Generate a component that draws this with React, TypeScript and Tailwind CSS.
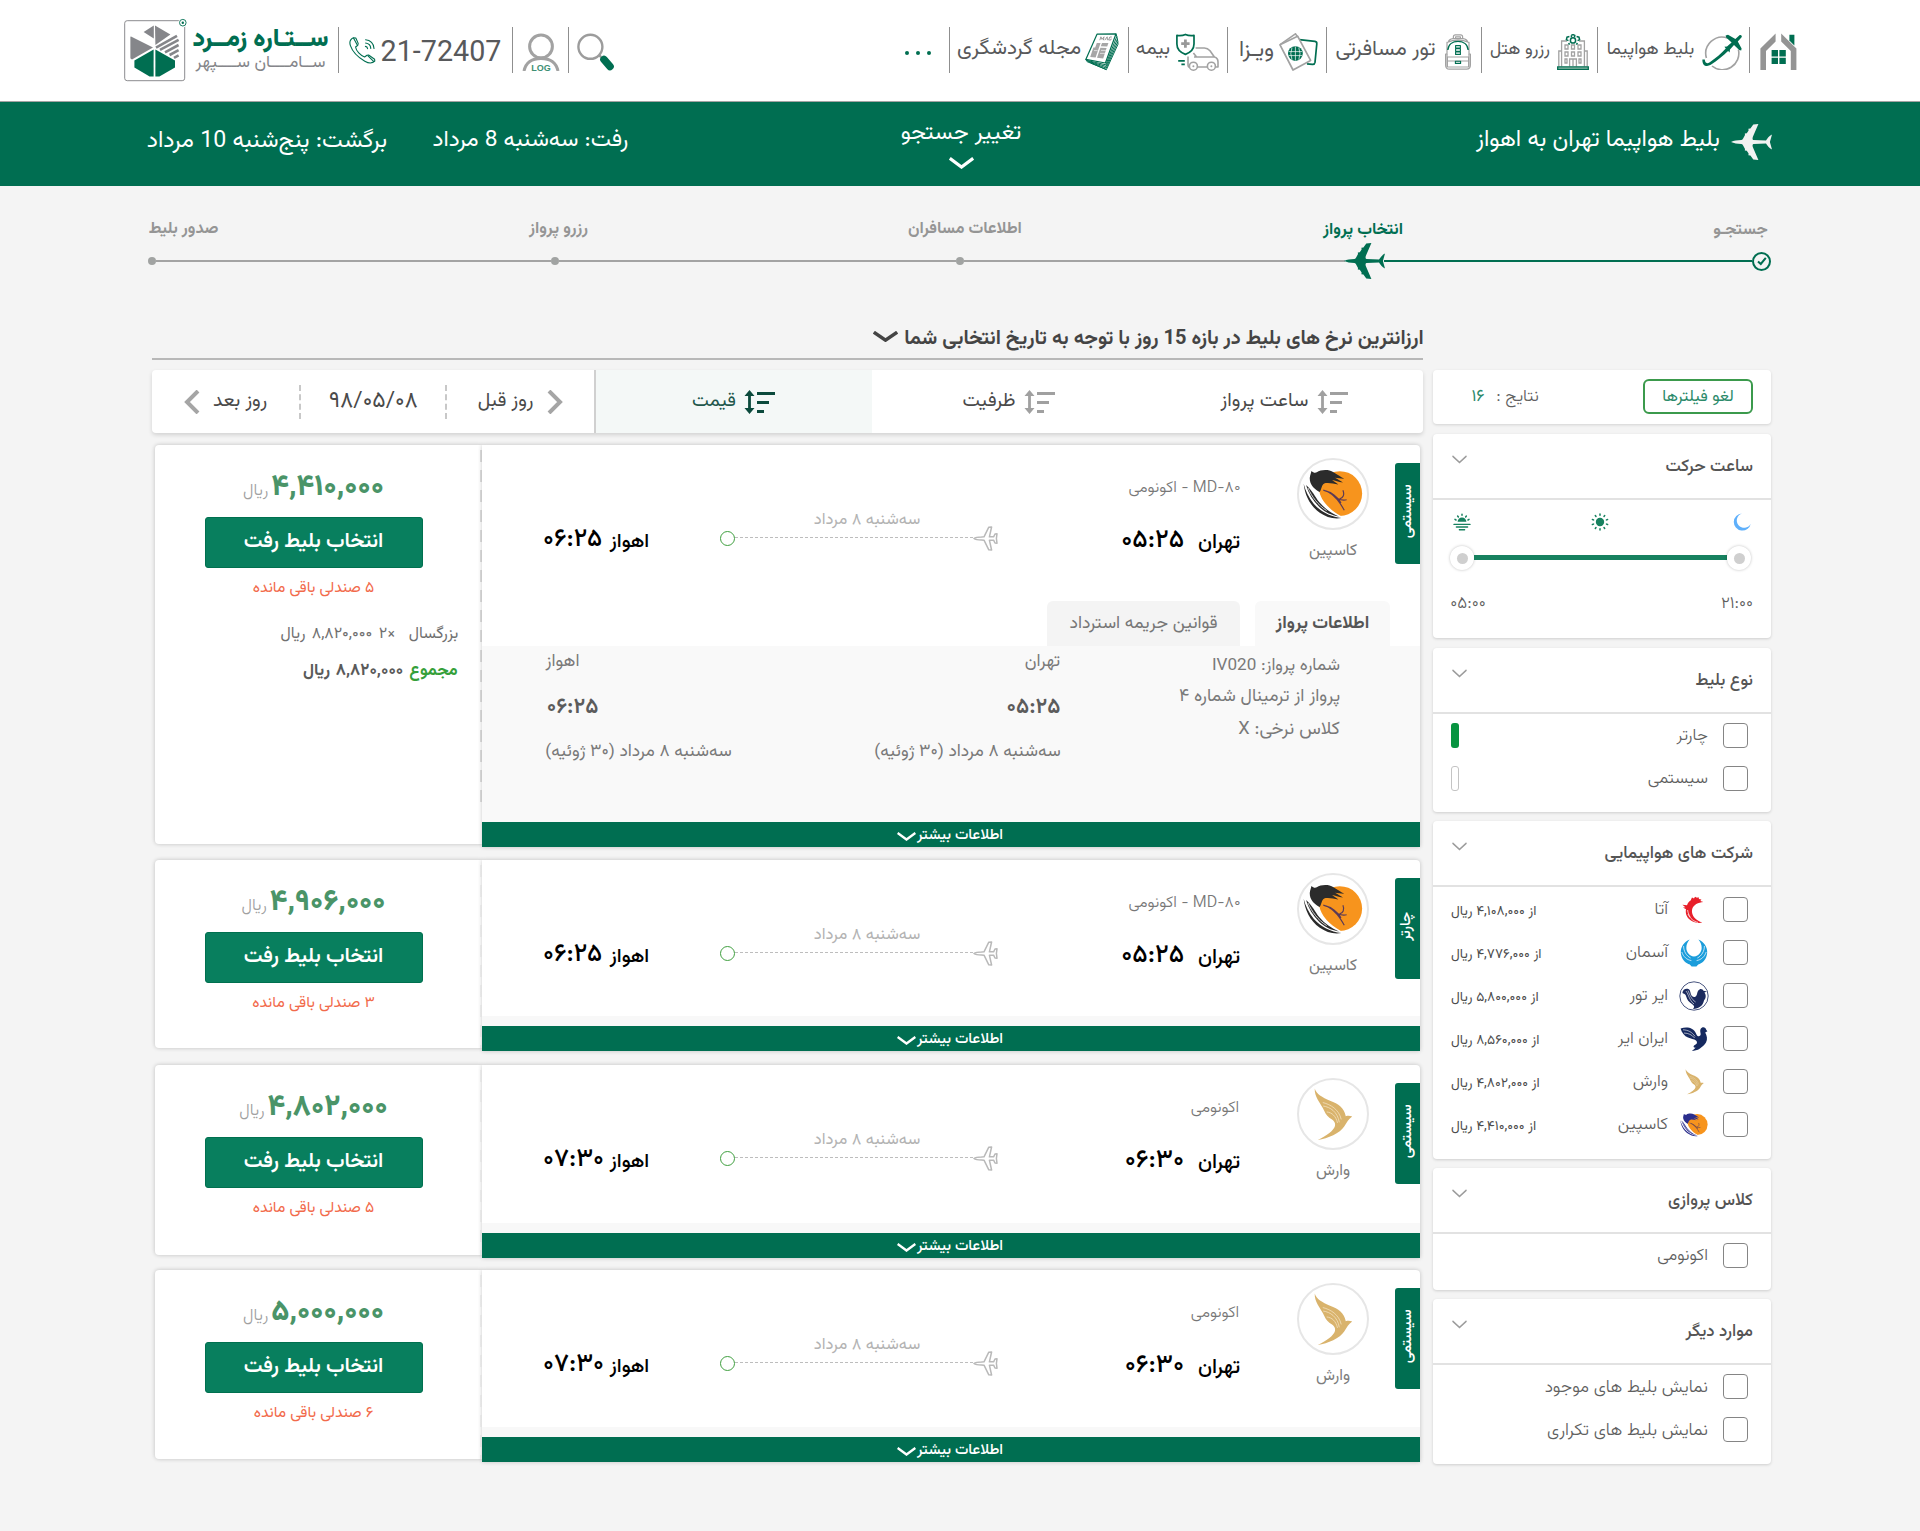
import React from "react";

type TextProps = { className?: string; children: React.ReactNode };

function T({ className = "", children }: TextProps) {
  return (
    <div dir="rtl" className={`flex shrink-0 items-center justify-center whitespace-nowrap ${className}`}>
      <span>{children}</span>
    </div>
  );
}

const GREEN = "#006e51";
const GRAY = "#999999";

function Chevron({ className = "", width = 2 }: { className?: string; width?: number }) {
  return (
    <svg viewBox="0 0 24 11" preserveAspectRatio="none" className={`shrink-0 ${className}`} fill="none" stroke="currentColor" strokeWidth={width}>
      <path d="M0.8 1.2 L12 9.2 L23.2 1.2" />
    </svg>
  );
}

function Airliner({ className = "" }: { className?: string }) {
  return (
    <svg viewBox="0 0 41 36" className={`shrink-0 ${className}`} fill="currentColor">
      <path d="M0 18 C3 16.6 6 16.2 10.5 16 C12 15.6 12.6 13.6 14 11 L13.8 9.4 L15.8 9.2 L17.6 6.4 L17.4 4.8 L19.4 4.6 L22.3 0.6 L27.4 0 L22 12.5 C21.3 14.3 21.4 15.8 22.4 16.1 L35 16.6 C36.3 14.6 38 12 41 10.6 L38.9 18 L41 25.4 C38 24 36.3 21.4 35 19.4 L22.4 19.9 C21.4 20.2 21.3 21.7 22 23.5 L27.4 36 L22.3 35.4 L19.4 31.4 L17.4 31.2 L17.6 29.6 L15.8 26.8 L13.8 26.6 L14 25 C12.6 22.4 12 20.4 10.5 20 C6 19.8 3 19.4 0 18 Z" />
    </svg>
  );
}

function OutlinePlane({ className = "" }: { className?: string }) {
  return (
    <svg viewBox="0 0 25 25" className={`shrink-0 ${className}`} fill="none" stroke="#b9b9b9" strokeWidth="1.5" strokeLinejoin="round">
      <path d="M1 12.5 C2.5 11.3 5 11 8.5 11 L11 10.8 L15.8 1.2 L18.6 1 L16.4 10.8 L20.6 10.8 L22 8 L24 7.8 L23.4 12.5 L24 17.2 L22 17 L20.6 14.2 L16.4 14.2 L18.6 24 L15.8 23.8 L11 14.2 L8.5 14 C5 14 2.5 13.7 1 12.5 Z" />
    </svg>
  );
}

function SortIcon({ className = "" }: { className?: string }) {
  return (
    <svg viewBox="0 0 31 24" className={`h-6 w-[31px] shrink-0 ${className}`} fill="currentColor">
      <path d="M5.5 0 L10.5 6 H6.9 V18 H10.5 L5.5 24 L0.5 18 H4.1 V6 H0.5 Z" />
      <rect x="13" y="2" width="18" height="3" />
      <rect x="13" y="11" width="12" height="3" />
      <rect x="13" y="20" width="7" height="3" />
    </svg>
  );
}

function CaspianLogo({ className = "", dark = "#2b2b2b" }: { className?: string; dark?: string }) {
  return (
    <svg viewBox="0 0 61 52" className={`shrink-0 ${className}`}>
      <circle cx="37.4" cy="25" r="22.8" fill="#f7941d" />
      <path d="M6 12 C9 18 12 21.4 16.6 23 C18.4 32 26 41 38.6 48 L34 50.6 L18 46 L6 30 Z" fill="#fff" />
      <path d="M8.5 2 C10.4 3.6 12 4.4 14 3.4 C18 0.6 26 0.2 31 3.2 C35 5.4 38 7.8 42 10 C38 9.6 35 9 32.6 8.8 C36 10.6 38 11.8 40.6 13.8 C36 13.2 32.6 11.8 29.6 11.2 C32 13 33.6 14 36 15.8 C31 15 27 13.8 23 14.4 C18.6 15.6 19.4 19.6 17 23.4 C13 21.6 8 17.6 7 12 C6.2 8 7.8 5.4 8.5 2 Z" fill={dark} />
      <g fill={dark}>
        <path d="M0.6 15 C1.6 26 7 37.6 17 44.6 C23.4 49 31 51.4 39 50 C28 48.6 18 43.6 11 35.6 C5.6 29 2.4 22 0.6 15 Z" />
        <path d="M3 16.4 C5.4 24.6 10 32.4 16.6 38.8 C22 43.8 28 47 36.6 48.4 C29 45.4 22 40.4 16.6 34 C12 28.4 10 22.6 3 16.4 Z" />
      </g>
      <path d="M5 19.4 C9 28.4 15 36.6 24 42.4" fill="none" stroke="#fff" strokeWidth="0.8" />
      <path d="M20.6 21.6 C29 23.6 36 29 38.6 34.6 M24 22.4 C33 27 37.4 34 42 42 M29 25.6 C33.4 30 39 32.4 44.4 31.4 M40.6 21.6 C42.6 26.4 40.6 29.6 37.4 30.4" fill="none" stroke="#5b3a56" strokeWidth="1.2" />
    </svg>
  );
}

function VareshLogo({ className = "" }: { className?: string }) {
  return (
    <svg viewBox="0 0 40 54" className={`shrink-0 ${className}`}>
      <path d="M1.4 0.4 C3 6 9 9.4 17 13 C25.6 16.4 31.4 20 33 28.8 C35 28.2 37 28.2 39.6 29 C36 31.2 34 35 31.6 39 C27 46.4 15 51.4 4.4 53 C13 48.6 20.8 43.4 22 38.6 C22.8 34.6 20 32.6 16.6 30.6 C12.8 28 11.6 24 9.6 20.4 C6.6 14.4 1 9 1.4 0.4 Z" fill="#d9b36c" />
      <path d="M10 18.4 C17 19.4 24.6 24 26.4 35 M13.6 24.4 C19 25 23 28.6 24.6 35.6 M9.6 14.8 C18 17 26 22 28.4 32" fill="none" stroke="#f3e2c1" strokeWidth="0.8" />
    </svg>
  );
}

function AtaLogo() {
  return (
    <svg viewBox="0 0 28 28" className="size-7">
      <path d="M12 1.6 L14 2.4 L15 0.8 L17 1.8 L18.6 1.2 L19 3 L21.4 3.4 L20.4 5 L23.4 6 C18.6 6.4 13 8.6 12 14 C11.2 19.6 16 24.6 22.4 26.6 C15 28 8 24.4 6.2 18.6 C5.6 16.2 5.8 14.4 6 13.2 L3 11.4 L5.4 11.2 L2.4 8.8 L7 9.2 C8 7 9 5.6 10.6 4.6 Z" fill="#e8202a" />
      <path d="M8 18 C10 22.6 14 25.6 18 26.4 M7.6 14 C8 17 9 19.4 10.4 21.4" fill="none" stroke="#fff" strokeWidth="0.7" />
    </svg>
  );
}

function AsemanLogo() {
  return (
    <svg viewBox="0 0 28 28" className="size-7">
      <path d="M9.6 0.6 C2.4 3.6 -0.6 10.6 1.4 17 C2.6 21.4 6 24.4 9.8 25.4 L11.6 27.4 H16.4 L18.2 25.4 C22 24.4 25.4 21.4 26.6 17 C28.6 10.6 25.6 3.6 18.4 0.6 C22.2 5 22.6 10.4 20 14 C18.4 16.2 16.4 17.4 14 17.4 C11.6 17.4 9.6 16.2 8 14 C5.4 10.4 5.8 5 9.6 0.6 Z" fill="#1b9ddb" />
      <path d="M1.8 13 C3.4 18 7 20.8 11.4 21.6 M3.6 7 C3.6 12.4 6.4 16.8 10.6 19 M26.2 13 C24.6 18 21 20.8 16.6 21.6 M24.4 7 C24.4 12.4 21.6 16.8 17.4 19" fill="none" stroke="#fff" strokeWidth="0.7" />
    </svg>
  );
}

function AirTourLogo() {
  return (
    <svg viewBox="0 0 30 30" className="size-[30px]">
      <circle cx="15" cy="15" r="14.2" fill="#fff" stroke="#1b2a5e" strokeWidth="0.8" />
      <path d="M3.4 12 C3.6 9 6 7.4 8.6 7.8 C11.2 8.2 11.2 11 12 13.6 C13 16.4 16 17 17.4 14.6 C18.6 12.6 18 9.6 20.6 8.4 C22.4 7.6 24 8.6 24.4 9.8 L28 10.4 L25.4 11.6 C27.4 14 27 17.6 25 19.4 C24 24.6 20 27.6 14 28 C17 25 13.6 24 11 21.6 C8 19 7.6 16.4 6.6 14 C5.6 13 4.6 12.6 3.4 12 Z" fill="#1b2a5e" />
      <path d="M7 10 C10 14 10 19 15 23 M9 9.6 C11 14 12 18 16.6 21" fill="none" stroke="#fff" strokeWidth="0.6" />
    </svg>
  );
}

function IranAirLogo() {
  return (
    <svg viewBox="0 0 28 28" className="size-7">
      <path d="M0.6 3.4 C7 1.4 13.6 2.6 16 8.4 C17 11 18.8 12.2 20.2 10.6 C21.6 9 19.4 6.6 20.6 4 C22 1.4 25.8 1.8 26.2 4.8 L27.4 6.2 L25.2 7.4 C27 10.6 27.8 14.4 26 17.4 C24.4 20.2 22.6 21.2 20 23.4 C17.4 25.6 14.6 25.2 11.6 26 C13.4 25 14.6 24 15.6 22.6 C13 23 12.8 20.8 15.6 19.6 C17.4 18.6 17.4 17 16 15.6 C14 14 11 14 8 12.6 C4.6 11 1.6 7.6 0.6 3.4 Z" fill="#15295f" />
      <path d="M3 4.8 C8 5 12 7 15 11.4 M4 8 C8.6 8.2 12 9.8 14.6 13" fill="none" stroke="#fff" strokeWidth="0.6" />
    </svg>
  );
}

/* ---------- header ---------- */

function Sep({ className = "" }: { className?: string }) {
  return <div className={`mt-[27px] h-[46px] w-px shrink-0 bg-[#8f8f8f] ${className}`} />;
}

function BrandMark() {
  return (
    <svg viewBox="0 0 64 64" className="mt-[18px] h-16 w-16 shrink-0">
      <rect x="0.7" y="2.7" width="60" height="60" rx="2.5" fill="#fff" stroke="#8c8c8f" strokeWidth="1" />
      <g fill="#85868a">
        <path d="M31 7.6 L46.4 16.4 L31.4 27 Z" />
        <path d="M29.8 7.6 V20.6 L19.6 14 Z" />
        <path d="M7 18.4 L29 29.6 L8 41.4 C6.8 40.8 6.4 40.4 6.4 39.4 V18.8 Z" />
      </g>
      <g stroke="#85868a" strokeWidth="2.6" fill="none">
        <path d="M32 29.6 L53 17.8" />
        <path d="M36 31.8 L54.6 21.8" />
        <path d="M41 34.4 L54.6 27" />
        <path d="M45.6 37 L54.6 32.2" />
        <path d="M50 39.8 L54.6 37.4" />
      </g>
      <path d="M29.6 31.6 V58.6 L25.6 58.6 L10.4 49.6 V42.4 Z" fill={GREEN} />
      <path d="M31.4 31.6 V58.6 L35.4 58.6 L51 49.6 V42.4 Z" fill={GREEN} />
      <circle cx="58.8" cy="4.7" r="4.6" fill="#fff" />
      <circle cx="58.8" cy="4.7" r="3.3" fill="none" stroke={GREEN} strokeWidth="0.9" />
      <circle cx="58.8" cy="4.7" r="1.2" fill={GREEN} />
    </svg>
  );
}

function PhoneIcon() {
  return (
    <svg viewBox="0 0 27 27" className="ml-2.5 mt-[37px] h-[27px] w-[27px] shrink-0" fill="none" stroke={GREEN} strokeWidth="1.1" strokeLinejoin="round" strokeLinecap="round">
      <path d="M4.4 0.8 L6.8 1 L9.2 6.4 L8.8 8.2 L6.6 10 C7 13.8 11.6 18.6 15.6 20 L18 18.2 L19.6 18 L25.6 22.2 L25.8 24 C23 27 20 26.6 15.8 24.2 C9.6 20.6 3.4 14.4 1.4 8.6 C0.2 5 1.4 2.2 4.4 0.8 Z" />
      <path d="M4.6 1.2 L8 7.4 M19 18.8 L24.6 24.4" />
      <path d="M16.4 9.4 C17.6 9.6 18.4 10.4 18.6 11.6 M16.6 6 C19.6 6.4 21.6 8.4 21.8 11.4 M16.6 2.8 C21.4 3 24.8 6.6 25 11.4" />
    </svg>
  );
}

function UserIcon() {
  return (
    <div className="ml-[9px] mt-[33px] flex h-[44px] w-[38px] shrink-0 flex-col items-center">
      <svg viewBox="0 0 38 38" className="h-[38px] w-[38px] shrink-0">
        <circle cx="19" cy="13.4" r="11.4" fill="none" stroke="#a2a2a2" strokeWidth="3" />
        <path d="M2 38 C3.6 30 9 25.4 19 25.4 C29 25.4 34.4 30 36 38" fill="none" stroke="#a2a2a2" strokeWidth="3" />
      </svg>
      <span className="-mt-[9px] shrink-0 font-['Liberation_Sans'] text-[9px] leading-[12px] font-bold text-[#3d8f74]">LOG</span>
    </div>
  );
}

function SearchIcon() {
  return (
    <svg viewBox="0 0 38 38" className="ml-2 mt-[33px] h-[38px] w-[38px] shrink-0">
      <circle cx="13.4" cy="13.8" r="12" fill="none" stroke="#9c9c9c" strokeWidth="2.4" />
      <path d="M22.4 22.4 L25 25" stroke="#9c9c9c" strokeWidth="2.4" />
      <path d="M27 26.6 L33 33.4" stroke={GREEN} strokeWidth="7.6" strokeLinecap="round" />
    </svg>
  );
}

function MagazineIcon() {
  return (
    <svg viewBox="0 0 34 38" className="mt-[33px] h-[38px] w-[34px] shrink-0" fill="none" strokeLinejoin="round">
      <path d="M12 1.2 L31 0.8 L20.4 30 L0.8 26.4 Z" fill="#fff" stroke={GREEN} strokeWidth="1.2" />
      <path d="M31 0.8 L31.8 3.4 L20.8 31.8 L1.8 27.4 M31.8 3.4 L32.4 6 L21 33.4 L3 28.2 M32.4 6 L32.8 8.6 L21.2 35 L4.4 29 M32.8 8.6 L33 11.2 L21.4 36.6 L6 30 M0.8 26.4 L2 28.6 L21.4 36.6" stroke={GREEN} strokeWidth="1" />
      <path d="M14.8 7.2 L15.9 3.8 L17 6.4 L19 3.8 L18.4 7.2 M19.8 7.2 L22.2 3.8 L22.4 7.2 M26.8 4 H24.8 L23.6 7 H25.8 L26.2 5.6" stroke={GRAY} strokeWidth="1" />
      <path d="M11.8 10 L15.6 10 L10.6 24.6 L5.2 24 L8.4 14.6 L10.2 14.4 Z M17 10 L23.4 10 L22.2 13.4 L15.8 13.2 Z M15.4 14.8 L21.6 15 L18.2 25.6 L12 24.8 Z" fill="#a6a6a6" />
      <path d="M16 17.4 H21 M15 20.4 H20 M9 17.6 H12.6" stroke="#fff" strokeWidth="0.6" />
    </svg>
  );
}

function InsuranceIcon() {
  return (
    <svg viewBox="0 0 43 38" className="mt-[33px] h-[38px] w-[43px] shrink-0" fill="none" strokeLinejoin="round">
      <path d="M19.6 15 H28.4 C31 15 32.6 16.2 34 17.8 L38.4 24 C41 24.6 42 26.4 42 29 V34 H39.6 M31.4 34 H21.4 M13.4 34 C12.2 34 12 33 12 31.4 V23.4 M18 24 H38 M20.6 24 L17.4 20" stroke="#a2a2a2" strokeWidth="1.6" />
      <circle cx="17.4" cy="33.2" r="4" stroke="#a2a2a2" strokeWidth="1.6" />
      <circle cx="17.4" cy="33.2" r="1" fill="#a2a2a2" />
      <circle cx="35.4" cy="33.2" r="4" stroke="#a2a2a2" strokeWidth="1.6" />
      <circle cx="35.4" cy="33.2" r="1" fill="#a2a2a2" />
      <path d="M9.4 1.4 C12 2.6 15 2.8 18 2.4 V11 C18 16 14.6 19.4 9.4 21.4 C4.2 19.4 0.9 16 0.9 11 V2.4 C4 2.8 7 2.6 9.4 1.4 Z" fill="#fff" stroke={GREEN} strokeWidth="1.7" />
      <path d="M9.4 6.4 V14.8 M5.2 10.6 H13.6" stroke={GRAY} strokeWidth="2.8" />
      <path d="M2.2 27.8 H8.8 M5.4 31.4 H8.8" stroke={GREEN} strokeWidth="1.7" />
    </svg>
  );
}

function VisaIcon() {
  return (
    <svg viewBox="0 0 39 38" className="mt-[33px] h-[38px] w-[39px] shrink-0" fill="none" strokeLinejoin="round">
      <path d="M18 6.4 L36 8.4 Q38 8.8 37.8 10.8 L36 29.4 Q35.6 31.6 33.4 31.4 L28 30.8" stroke={GREEN} strokeWidth="1.7" />
      <path d="M1.4 11.4 L16.4 0.8 L19 4.4" stroke="#a2a2a2" strokeWidth="1.6" />
      <path d="M1 11.8 L18.6 3.2 L31.6 27.4 L14 37 Z" fill="#fff" stroke="#a2a2a2" strokeWidth="1.7" />
      <circle cx="16.4" cy="20.6" r="7.4" fill={GREEN} />
      <path d="M9.6 18.6 H23.2 M9.6 22.6 H23.2 M16.4 13.6 V27.6 M13 14.6 Q10.6 20.6 13 26.6 M19.8 14.6 Q22.2 20.6 19.8 26.6" stroke="#fff" strokeWidth="0.7" />
    </svg>
  );
}

function BackpackIcon() {
  return (
    <svg viewBox="0 0 26 36" className="mt-[34px] h-9 w-[26px] shrink-0" fill="none" stroke="#a2a2a2" strokeWidth="1.2" strokeLinejoin="round">
      <path d="M8.4 4.4 V2.8 Q8.4 0.8 10.4 0.8 H15.6 Q17.6 0.8 17.6 2.8 V4.4 M10.6 4.4 V2.8 H15.4 V4.4" />
      <path d="M3.4 8 Q4 5 8 4.6 H18 Q22 5 22.6 8 M2 8.4 Q13 4 24 8.4 V20 H25.4 V31 Q25.4 35.2 21.6 35.2 H4.4 Q0.6 35.2 0.6 31 V20 H2 Z" />
      <path d="M2.4 23 H23.6 V33 H2.4 Z M2.4 27 H23.6 M2 20 V33 M24 20 V33" />
      <path d="M2.8 16 C3.4 10 8 7.4 13 7.4 C18 7.4 22.6 10 23.2 16" stroke={GREEN} strokeWidth="1.4" />
      <path d="M10.6 11.6 H15.4 V14 H10.6 Z M10.6 14.8 H15.4 V17.2 H10.6 Z M10.6 18 H15.4 V20.4 H10.6 Z M10.4 27.2 H15.6 V29.4 H10.4 Z" stroke={GREEN} strokeWidth="1.1" />
    </svg>
  );
}

function HotelIcon() {
  return (
    <svg viewBox="0 0 32 36" className="mt-[34px] h-9 w-8 shrink-0" fill="none" stroke="#a2a2a2" strokeWidth="1.3">
      <path d="M4.6 32.4 V7 H10 M22 7 H27.4 V32.4 M1.8 32.4 V17 H4.6 M30.2 32.4 V17 H27.4" />
      <path d="M8 11 H11 V15 H8 Z M14.5 11 H17.5 V15 H14.5 Z M21 11 H24 V15 H21 Z M8 18 H11 V22 H8 Z M14.5 18 H17.5 V22 H14.5 Z M21 18 H24 V22 H21 Z M8 25 H10 V29 H8 Z M22 25 H24 V29 H22 Z M12.6 32.4 V25 H19.4 V32.4 M16 25 V32" />
      <path d="M0.7 32.9 H31.3 V35.3 H0.7 Z" fill="#8fb8a8" stroke={GREEN} />
      <g stroke={GREEN} strokeWidth="1.5">
        <circle cx="16" cy="6.4" r="2.6" />
        <path d="M14.2 1.4 L16 0.6 L17.8 1.4 L17.4 3.4 M19.6 2.6 L22 3.2 L22.6 5.6 L20.6 6.6 M20.4 9 L19.4 10.6 M11.6 9 L12.6 10.6 M11.4 6.6 L9.4 5.6 L10 3.2 L12.4 2.6 M14.6 3.4 L14.2 1.4" />
      </g>
    </svg>
  );
}

function FlightIcon() {
  return (
    <svg viewBox="0 0 41 36" className="mt-[34px] h-9 w-[41px] shrink-0" fill="none">
      <path d="M26 4.2 A16.4 16.4 0 0 0 4.4 24 M10 32 A16.4 16.4 0 0 0 36.4 15.6" stroke="#a2a2a2" strokeWidth="1.6" />
      <path d="M0.4 25.4 C0 31.6 4.4 33.4 8.8 30.8 C15.6 26.6 20.8 22 26.6 16.6 L24 14.2 C19.4 19.2 13.6 24.2 7.8 28.2 C4.8 30.2 3 29 2.8 25.6 Z" fill={GREEN} />
      <path d="M25 12.6 L29.6 8.6 L24.2 3.6 L23.6 1.4 L26 0.8 L33.4 5 L37.2 1.4 C38.8 0 40.8 2 39.4 3.6 L35.8 7.4 L39.6 14.4 L39.2 16.4 L37.2 16 L32 11 L28 15.6 L27.6 18.4 L24.6 15.6 L22.4 12.8 Z" fill={GREEN} />
    </svg>
  );
}

function HomeIcon() {
  return (
    <svg viewBox="0 0 37 38" className="ml-[10px] mt-[33px] h-[38px] w-[37px] shrink-0">
      <path d="M0.4 37 V15.4 L15.6 0.6 V8.6 L6 18 V37 Z" fill="#949494" />
      <path d="M36.4 37 V15.4 L21.2 0.6 V8.6 L30.8 18 V37 Z" fill="#949494" />
      <path d="M29.4 1.8 H34.4 V12.4 L29.4 7.4 Z" fill={GREEN} />
      <path d="M11.6 17 H18 V23.4 H11.6 Z M19.4 17 H25.8 V23.4 H19.4 Z M11.6 24.8 H18 V31 H11.6 Z M19.4 24.8 H25.8 V31 H19.4 Z" fill={GREEN} />
    </svg>
  );
}

const navText = "mt-[36px] h-7 text-[#58595b]";

function Header() {
  return (
    <header className="flex h-[102px] items-start border-b border-[#a3a3a3] bg-white pl-[124px]">
      <BrandMark />
      <div className="ml-[4px] mt-[27px] flex w-[137px] shrink-0 flex-col">
        <T className="h-[26px] w-[137px] text-[24.6px] leading-none font-black text-[#006e51]">ســتـاره زمــرد</T>
        <T className="mt-px h-[18px] w-[137px] text-[17px] leading-none text-[#85868a]">ســامــــان ســــپهر</T>
      </div>
      <Sep className="ml-[9px]" />
      <PhoneIcon />
      <T className="ml-[5px] mt-[36px] h-8 w-[120px] font-['Roboto'] text-[28.7px] text-[#58595b]">21-72407</T>
      <Sep className="ml-[11px]" />
      <UserIcon />
      <Sep className="ml-[8px]" />
      <SearchIcon />
      <div className="ml-[290px] mt-[51px] flex w-[26px] shrink-0 justify-between">
        <div className="size-1 rounded-full bg-[#006e51]" />
        <div className="size-1 rounded-full bg-[#006e51]" />
        <div className="size-1 rounded-full bg-[#006e51]" />
      </div>
      <Sep className="ml-[18px]" />
      <T className={`ml-[7px] w-[124px] text-[20.9px] ${navText}`}>مجله گردشگری</T>
      <div className="w-[4px] shrink-0" />
      <MagazineIcon />
      <Sep className="ml-[9px]" />
      <T className={`ml-[7px] w-[34px] text-[19.6px] ${navText}`}>بیمه</T>
      <div className="w-[6px] shrink-0" />
      <InsuranceIcon />
      <Sep className="ml-[8px]" />
      <T className={`ml-[10px] w-[37px] text-[22px] ${navText}`}>ویـزا</T>
      <div className="w-[4px] shrink-0" />
      <VisaIcon />
      <Sep className="ml-[8px]" />
      <T className={`ml-[8px] w-[101px] text-[21.1px] ${navText}`}>تور مسافرتی</T>
      <div className="w-[9px] shrink-0" />
      <BackpackIcon />
      <Sep className="ml-[10px]" />
      <T className={`ml-[8px] w-[60px] text-[17.4px] ${navText}`}>رزرو هتل</T>
      <div className="w-[7px] shrink-0" />
      <HotelIcon />
      <Sep className="ml-[8px]" />
      <T className={`ml-[9px] w-[87px] text-[17.8px] ${navText}`}>بلیط هواپیما</T>
      <div className="w-[8px] shrink-0" />
      <FlightIcon />
      <Sep className="ml-[6px]" />
      <HomeIcon />
    </header>
  );
}

function SearchBand() {
  return (
    <section className="flex h-[84px] items-start bg-[#006e51] pl-[147px] text-[23.2px] text-white">
      <T className="mt-[23px] h-8 w-[240px]">برگشت: پنج‌شنبه 10 مرداد</T>
      <T className="ml-[46px] mt-[23px] h-8 w-[195px] text-[22.7px]">رفت: سه‌شنبه 8 مرداد</T>
      <div className="ml-[272px] flex w-[122px] flex-col items-center">
        <T className="mt-[16px] h-8 w-[120px] text-[22.6px]">تغییر جستجو</T>
        <Chevron width={3} className="mt-[7px] h-3 w-[25px]" />
      </div>
      <T className="ml-[454px] mt-[22px] h-8 w-[244px] text-[23.2px]">بلیط هواپیما تهران به اهواز</T>
      <Airliner className="ml-[11px] mt-[22px] h-9 w-[41px] text-[#f2f2f2]" />
    </section>
  );
}

function Steps() {
  return (
    <section className="h-[134px] pl-[148px] pt-[29px]">
      <div className="flex h-7 text-[16.5px] font-bold text-[#959595]">
        <T className="h-7 w-[71px]">صدور بلیط</T>
        <T className="ml-[310px] h-7 w-[59px]">رزرو پرواز</T>
        <T className="ml-[321px] h-7 w-[112px]">اطلاعات مسافران</T>
        <T className="ml-[301px] mt-px h-7 w-[82px] text-[#006e51]">انتخاب پرواز</T>
        <T className="ml-[308px] mt-px h-7 w-[57px]">جستجـو</T>
      </div>
      <div className="flex h-9 items-center">
        <div className="size-2 rounded-full bg-[#a1a3a2]" />
        <div className="h-0.5 w-[395px] bg-[#a3a3a3]" />
        <div className="size-2 rounded-full bg-[#a1a3a2]" />
        <div className="h-0.5 w-[397px] bg-[#a3a3a3]" />
        <div className="size-2 rounded-full bg-[#a1a3a2]" />
        <div className="h-0.5 w-[381px] bg-[#a3a3a3]" />
        <Airliner className="-mx-px h-9 w-[41px] text-[#006e51]" />
        <div className="h-0.5 w-[368px] bg-[#006e51]" />
        <div className="flex size-[19px] items-center justify-center rounded-full border-2 border-[#006e51] text-[#006e51]">
          <svg viewBox="0 0 10 10" className="size-2.5" fill="none" stroke="currentColor" strokeWidth="2">
            <path d="M1 5.4 L3.8 8 L8.8 1.8" />
          </svg>
        </div>
      </div>
    </section>
  );
}

/* ---------- sidebar ---------- */

function FilterCard({ title, className, children }: { title: string; className: string; children: React.ReactNode }) {
  return (
    <div className={`overflow-hidden rounded-[4px] bg-white shadow-[0_1px_3px_rgba(0,0,0,0.16)] ${className}`}>
      <div className="flex h-[66px] items-start justify-between border-b-2 border-[#e2e2e2] pl-[19px] pr-[18px]">
        <Chevron width={2} className="mt-[21px] h-[9px] w-[15px] text-[#9c9c9c]" />
        <div dir="rtl" className="mt-[19px] h-7 text-[17px] leading-7 font-medium text-[#555]">
          {title}
        </div>
      </div>
      {children}
    </div>
  );
}

function FilterRow({ label, icon, price, mark, wide }: { label: string; icon?: React.ReactNode; price?: string; mark?: React.ReactNode; wide?: boolean }) {
  return (
    <div className="flex h-[43px] items-start pl-[18px] pr-[23px]">
      {mark}
      {price && (
        <div dir="rtl" className="mt-[2px] text-[13.8px] leading-[25px] whitespace-nowrap text-[#4c4c4c]">
          {price}
        </div>
      )}
      <div dir="rtl" className={`mt-px ml-auto leading-[25px] font-light whitespace-nowrap text-[#606060] ${wide ? "text-[17.4px]" : "text-[16.8px]"}`}>
        {label}
      </div>
      {icon && <div className="-mt-0.5 ml-[11px] flex size-[30px] items-center justify-center">{icon}</div>}
      <div className={`size-[25px] shrink-0 rounded-[4px] border border-[#858585] ${icon ? "ml-[14px]" : "ml-[15px]"}`} />
    </div>
  );
}

function Knob() {
  return (
    <div className="flex size-6 shrink-0 items-center justify-center rounded-full bg-white shadow-[0_0_3px_rgba(0,0,0,0.25)]">
      <div className="size-[11px] rounded-full bg-[#cfcfcf]" />
    </div>
  );
}

const rays = [0, 36, 72, 108, 144, 180, 216, 252, 288, 324];

function SunIcon({ half }: { half?: boolean }) {
  return (
    <svg viewBox="0 0 18 18" className="size-[18px]" fill="none" stroke="#17815f" strokeWidth="1.5" strokeLinecap="round">
      {half ? (
        <>
          <path d="M4.6 8.8 A4.4 4.4 0 0 1 13.4 8.8 Z" fill="#17815f" stroke="none" />
          <path d="M1 11.4 H17 M3.4 14 H14.6 M6.4 16.8 H11.6" strokeWidth="1.4" />
          <path d="M2 6.4 L3 7 M4.6 3 L5.4 4 M9 1.2 V2.2 M13.4 3 L12.6 4 M16 6.4 L15 7" />
        </>
      ) : (
        <>
          <circle cx="9" cy="9" r="4.2" fill="#17815f" stroke="none" />
          {rays.map((a) => (
            <path key={a} d="M9 1 V2.2" transform={`rotate(${a} 9 9)`} />
          ))}
        </>
      )}
    </svg>
  );
}

const airlines = [
  { label: "آتا", price: "از ۴,۱۰۸,۰۰۰ ریال", icon: <AtaLogo /> },
  { label: "آسمان", price: "از ۴,۷۷۶,۰۰۰ ریال", icon: <AsemanLogo /> },
  { label: "ایر تور", price: "از ۵,۸۰۰,۰۰۰ ریال", icon: <AirTourLogo /> },
  { label: "ایران ایر", price: "از ۸,۵۶۰,۰۰۰ ریال", icon: <IranAirLogo /> },
  { label: "وارش", price: "از ۴,۸۰۲,۰۰۰ ریال", icon: <VareshLogo className="h-[26px] w-[19px]" /> },
  { label: "کاسپین", price: "از ۴,۴۱۰,۰۰۰ ریال", icon: <CaspianLogo dark="#2b2e8c" className="h-6 w-[28px]" /> },
];

function Sidebar() {
  return (
    <aside className="ml-[10px] flex w-[338px] flex-col pt-[50px]">
      <div className="flex h-[54px] items-start rounded-[4px] bg-white pl-[39px] shadow-[0_1px_3px_rgba(0,0,0,0.14)]">
        <T className="mt-[14px] h-7 w-3 text-[17px] text-[#2c8a6b]">۱۶</T>
        <T className="ml-[12px] mt-[14px] h-7 w-[43px] text-[17px] font-light text-[#606060]">نتایج :</T>
        <div className="ml-[104px] mt-[9px] rounded-[6px] border-2 border-[#3b9a4c] pt-px text-[16.5px] text-[#2b8a6a]">
          <T className="h-[30px] w-[106px]">لغو فیلترها</T>
        </div>
      </div>

      <FilterCard title="ساعت حرکت" className="mt-[10px] h-[204px]">
        <div className="mt-[13px] flex h-[18px] items-center justify-between pl-[20px] pr-[20px]">
          <SunIcon half />
          <div className="mr-[4px]">
            <SunIcon />
          </div>
          <svg viewBox="0 0 18 18" className="size-[18px]">
            <path d="M9 0.4 A8.6 8.6 0 1 0 17.8 10.8 A7.4 7.4 0 1 1 9 0.4 Z" fill="#5fb0fb" />
          </svg>
        </div>
        <div className="mt-[15px] flex h-6 items-center pl-[17px] pr-[20px]">
          <Knob />
          <div className="mb-0.5 h-[5px] flex-1 bg-[#17815f]" />
          <Knob />
        </div>
        <div className="mt-[21px] flex h-7 items-center justify-between pl-[17px] pr-[18px] text-[#606060]">
          <T className="h-7 w-[36px] text-[17px] font-light">۰۵:۰۰</T>
          <T className="h-7 w-[32px] text-[17px] font-light">۲۱:۰۰</T>
        </div>
      </FilterCard>

      <FilterCard title="نوع بلیط" className="mt-[10px] h-[164px]">
        <div className="pt-[9px]">
          <FilterRow label="چارتر" mark={<div className="h-[25px] w-2 rounded-[3px] bg-[#079440]" />} />
          <FilterRow label="سیستمی" mark={<div className="h-[25px] w-2 rounded-[3px] border border-[#c4c4c4]" />} />
        </div>
      </FilterCard>

      <FilterCard title="شرکت های هواپیمایی" className="mt-[9px] h-[338px]">
        <div className="pt-[10px]">
          {airlines.map((a) => (
            <FilterRow key={a.label} label={a.label} price={a.price} icon={a.icon} />
          ))}
        </div>
      </FilterCard>

      <FilterCard title="کلاس پروازی" className="mt-[9px] h-[122px]">
        <div className="pt-[9px]">
          <FilterRow label="اکونومی" />
        </div>
      </FilterCard>

      <FilterCard title="موارد دیگر" className="mt-[9px] h-[165px]">
        <div className="pt-[9px]">
          <FilterRow wide label="نمایش بلیط های موجود" />
          <FilterRow wide label="نمایش بلیط های تکراری" />
        </div>
      </FilterCard>
    </aside>
  );
}

/* ---------- results ---------- */

function SortBar() {
  return (
    <div className="mt-[10px] flex h-[63px] items-center rounded-[4px] bg-white text-[19.5px] text-[#4a4a4a] shadow-[0_2px_4px_rgba(0,0,0,0.14)]">
      <svg viewBox="0 0 16 24" className="ml-[32px] h-6 w-4" fill="none" stroke="#a5a5a5" strokeWidth="4">
        <path d="M14 1 L3 12 L14 23" />
      </svg>
      <T className="ml-[13px] h-7 w-[54px]">روز بعد</T>
      <div className="ml-[32px] h-[34px] border-l-2 border-dashed border-[#c8c8c8]" />
      <T className="ml-[28px] mt-0.5 h-7 w-[89px] text-[22.7px]">۹۸/۰۵/۰۸</T>
      <div className="ml-[27px] h-[34px] border-l-2 border-dashed border-[#c8c8c8]" />
      <T className="ml-[31px] h-7 w-[55px]">روز قبل</T>
      <svg viewBox="0 0 16 24" className="ml-[14px] h-6 w-4" fill="none" stroke="#a5a5a5" strokeWidth="4">
        <path d="M2 1 L13 12 L2 23" />
      </svg>
      <div className="ml-[31px] flex h-full w-[278px] items-center border-l-2 border-[#d0d0d0] bg-[#f4f8f7]">
        <T className="ml-[96px] mt-px h-7 w-[44px] text-[18.9px] text-[#22564b]">قیمت</T>
        <SortIcon className="ml-[8px] text-[#0b4a3c]" />
      </div>
      <T className="ml-[90px] h-7 w-[54px]">ظرفیت</T>
      <SortIcon className="ml-[8px] text-[#a0a0a0]" />
      <T className="ml-[165px] h-7 w-[89px]">ساعت پرواز</T>
      <SortIcon className="ml-[8px] text-[#a0a0a0]" />
    </div>
  );
}

type Flight = {
  kind: string;
  airline: string;
  caspian?: boolean;
  aircraft?: string;
  dep: string;
  arr: string;
  price: string;
  seats: string;
  open?: boolean;
  height: string;
};

const flights: Flight[] = [
  { kind: "سیستمی", airline: "کاسپین", caspian: true, aircraft: "MD-۸۰", dep: "۰۵:۲۵", arr: "۰۶:۲۵", price: "۴,۴۱۰,۰۰۰", seats: "۵ صندلی باقی مانده", open: true, height: "h-[402px]" },
  { kind: "چارتر", airline: "کاسپین", caspian: true, aircraft: "MD-۸۰", dep: "۰۵:۲۵", arr: "۰۶:۲۵", price: "۴,۹۰۶,۰۰۰", seats: "۳ صندلی باقی مانده", height: "h-[191px] mt-[13px]" },
  { kind: "سیستمی", airline: "وارش", dep: "۰۶:۳۰", arr: "۰۷:۳۰", price: "۴,۸۰۲,۰۰۰", seats: "۵ صندلی باقی مانده", height: "h-[193px] mt-[14px]" },
  { kind: "سیستمی", airline: "وارش", dep: "۰۶:۳۰", arr: "۰۷:۳۰", price: "۵,۰۰۰,۰۰۰", seats: "۶ صندلی باقی مانده", height: "h-[192px] mt-[12px]" },
];

function PricePanel({ f }: { f: Flight }) {
  return (
    <div className="mb-[3px] flex w-[327px] shrink-0 justify-between rounded-l-[4px] bg-white shadow-[0_0_4px_rgba(0,0,0,0.22)]">
      <div className="flex w-[317px] flex-col items-center">
        <div className="mt-[23px] flex h-10 items-center gap-[3px]">
          <T className="mt-[6px] h-8 text-[16.5px] font-light text-[#a0a0a0]">ریال</T>
          <T className="h-10 text-[29.6px] font-extrabold text-[#4a9468]">{f.price}</T>
        </div>
        <button className="mt-[9px] flex h-[51px] w-[218px] items-center justify-center rounded-[3px] border border-[#00704f] bg-[#087f5e] text-white">
          <T className="h-8 w-[139px] text-[20.8px] font-semibold">انتخاب بلیط رفت</T>
        </button>
        <T className="mt-[7px] h-7 w-[122px] text-[15.6px] text-[#f26a4b]">{f.seats}</T>
        {f.open && (
          <div className="mt-[18px] flex w-full flex-col gap-[9px] pr-[14px]">
            <div dir="rtl" className="flex h-7 items-center text-[16px] text-[#707070]">
              <T className="w-[49px]">بزرگسال</T>
              <T className="mr-[14px] w-[16px]">×۲</T>
              <T className="mr-[7px] w-[60px]">۸,۸۲۰,۰۰۰</T>
              <T className="mr-[6px] w-[26px]">ریال</T>
            </div>
            <div dir="rtl" className="flex h-7 items-center text-[16.8px] font-bold text-[#5a5a5a]">
              <T className="w-[49px] text-[#35a03a]">مجموع</T>
              <T className="mr-[6px] w-[67px]">۸,۸۲۰,۰۰۰</T>
              <T className="mr-[5px] w-[29px]">ریال</T>
            </div>
          </div>
        )}
      </div>
      <div className={`mt-[5px] w-0.5 bg-[repeating-linear-gradient(to_bottom,#e0e0e0_0_12px,transparent_12px_20px)] ${f.open ? "mb-[42px]" : "opacity-60"}`} />
    </div>
  );
}

function Details() {
  return (
    <div className="flex flex-col">
      <div className="flex h-[45px] text-[17.6px]">
        <T className="ml-[565px] w-[193px] rounded-t-[6px] bg-[#f4f4f4] pt-0.5 text-[#777]">قوانین جریمه استرداد</T>
        <T className="ml-[15px] w-[135px] rounded-t-[6px] bg-[#f9f9f9] pt-0.5 font-bold text-[#555]">اطلاعات پرواز</T>
      </div>
      <div className="flex h-[176px] items-start bg-[#f9f9f9] text-[17.4px] text-[#7a7a7a]">
        <div className="ml-[63px] flex w-[187px] flex-col">
          <T className="mt-[2px] h-7 w-[35px]">اهواز</T>
          <T className="ml-px mt-[18px] h-7 w-[53px] text-[21.8px] font-semibold text-[#5c5c5c]">۰۶:۲۵</T>
          <T className="mt-[16px] h-7 w-[187px]">سه‌شنبه ۸ مرداد (۳۰ ژوئیه)</T>
        </div>
        <div className="ml-[142px] flex w-[187px] flex-col items-end">
          <T className="mt-[2px] h-7 w-[37px]">تهران</T>
          <T className="mt-[18px] h-7 w-[55px] text-[21.8px] font-semibold text-[#5c5c5c]">۰۵:۲۵</T>
          <T className="mt-[16px] h-7 w-[187px]">سه‌شنبه ۸ مرداد (۳۰ ژوئیه)</T>
        </div>
        <div className="ml-[80px] flex w-[199px] flex-col items-end pt-[4px]">
          <T className="h-[31px] w-[128px] text-[17.1px]">شماره پرواز: IV020</T>
          <T className="mt-px h-[31px] w-[161px] text-[17.8px]">پرواز از ترمینال شماره ۴</T>
          <T className="mt-px h-[31px] w-[102px] text-[18.2px]">کلاس نرخی: X</T>
        </div>
      </div>
    </div>
  );
}

function FlightCard({ f }: { f: Flight }) {
  return (
    <article className={`ml-[3px] flex w-[1265px] ${f.height}`}>
      <PricePanel f={f} />
      <div className="flex w-[938px] flex-col overflow-hidden rounded-tr-[4px] bg-white shadow-[0_0_4px_rgba(0,0,0,0.22)]">
        <div className={`flex shrink-0 items-start ${f.open ? "h-[156px]" : "flex-1"}`}>
          <div className="ml-[61px] mt-[80px] flex h-8 w-[106px] items-center justify-between text-black">
            <T className="text-[25.2px] font-medium">{f.arr}</T>
            <T className="mt-1 w-[39px] text-[19.8px] font-medium">اهواز</T>
          </div>
          <div className="ml-[71px] mt-[61px] flex w-[278px] flex-col">
            <T className="ml-[94px] h-7 w-[106px] text-[16.5px] text-[#b3b3b3]">سه‌شنبه ۸ مرداد</T>
            <div className="-mt-[8px] flex h-[25px] items-center">
              <div className="size-[15px] rounded-full border-[1.5px] border-[#3f9f3f]" />
              <div className="mb-0.5 flex-1 border-t border-dashed border-[#bdbdbd]" />
              <OutlinePlane className="h-[25px] w-[25px]" />
            </div>
          </div>
          <div className="ml-[121px] mt-[30px] flex w-[121px] flex-col items-end">
            <T className={`h-7 text-[16px] font-light text-[#777] ${f.aircraft ? "w-[111px]" : "w-[50px]"}`}>{f.aircraft ? "MD-۸۰ - اکونومی" : "اکونومی"}</T>
            <div className="mt-[22px] flex h-8 items-center gap-[14px] text-black">
              <T className="text-[25.6px] font-medium">{f.dep}</T>
              <T className="mt-1 w-[42px] text-[20.4px] font-medium">تهران</T>
            </div>
          </div>
          <div className="ml-[56px] mt-[13px] flex w-[73px] flex-col items-center">
            <div className="flex size-[72px] items-center justify-center rounded-full border-2 border-[#e6e6e6]">
              {f.caspian ? <CaspianLogo className="h-[51px] w-[60px]" /> : <VareshLogo className="h-[53px] w-[40px]" />}
            </div>
            <T className="ml-px mt-[8px] h-7 w-[47px] text-[16px] text-[#7d7d7d]">{f.airline}</T>
          </div>
          <div className="ml-[26px] mt-[18px] flex h-[101px] w-[25px] items-center justify-center rounded-l-[3px] bg-[#006e51]">
            <div dir="rtl" className="mb-1 -rotate-90 text-[15px] font-medium whitespace-nowrap text-white">
              {f.kind}
            </div>
          </div>
        </div>
        {f.open ? <Details /> : <div className="h-[10px] bg-[#f8f8f8]" />}
        <div className="flex h-[25px] shrink-0 items-center bg-[#006e51] pl-[415px] text-white">
          <Chevron width={3} className="mt-1 h-[9px] w-[19px]" />
          <T className="ml-px mt-[3px] h-6 w-[86px] text-[15.1px] font-medium">اطلاعات بیشتر</T>
        </div>
      </div>
    </article>
  );
}

export default function App() {
  return (
    <div dir="ltr" className="h-[1531px] w-[1920px] overflow-hidden bg-[#f4f4f4] font-['Vazirmatn','Roboto','DejaVu_Sans',sans-serif]">
      <Header />
      <SearchBand />
      <Steps />
      <main className="flex items-start pl-[152px]">
        <section className="flex w-[1271px] shrink-0 flex-col">
          <div className="flex h-[40px] items-start justify-end border-b-2 border-[#b8b8b8]">
            <Chevron width={3.4} className="mr-[7px] mt-[11px] h-[11px] w-[25px] text-[#444]" />
            <T className="mt-[3px] h-8 w-[518px] text-[20px] font-bold text-[#444]">ارزانترین نرخ های بلیط در بازه 15 روز با توجه به تاریخ انتخابی شما</T>
          </div>
          <SortBar />
          <div className="mt-[12px] flex flex-col">
            {flights.map((f, i) => (
              <FlightCard key={i} f={f} />
            ))}
          </div>
        </section>
        <Sidebar />
      </main>
    </div>
  );
}
